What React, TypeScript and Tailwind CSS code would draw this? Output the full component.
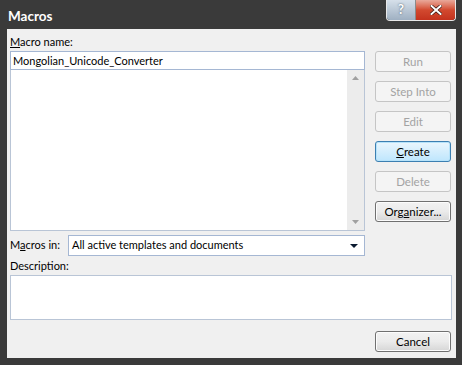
const font = { fontFamily: 'Lato, "Noto Sans", sans-serif' };

function DlgButton({ label, accel, state }: { label: string; accel?: number; state: "disabled" | "normal" | "focused" }) {
  const cls =
    state === "disabled"
      ? "border-[#c5c5c5] bg-[#f4f4f4] text-[#a3a3a3]"
      : state === "focused"
      ? "border-[#3c7fb1] bg-gradient-to-b from-[#eaf6fd] to-[#bee6fd] text-black shadow-[inset_0_0_0_1px_#b7e3fa]"
      : "border-[#707070] bg-gradient-to-b from-[#f2f2f2] via-[#ebebeb] to-[#d6d6d6] text-black shadow-[inset_0_0_0_1px_#fcfcfc]";
  return (
    <div className={`flex h-[21px] w-[76px] items-center justify-center rounded-[3px] border text-[11.5px] ${cls}`}>
      {accel === undefined ? (
        label
      ) : (
        <span>
          {label.slice(0, accel)}
          <span className="underline">{label[accel]}</span>
          {label.slice(accel + 1)}
        </span>
      )}
    </div>
  );
}

export default function App() {
  return (
    <div className="flex h-[365px] w-[462px] flex-col bg-[#3a3a3a]" style={font}>
      {/* title bar */}
      <div className="flex h-[29px] items-start justify-between">
        <span className="pl-[8px] pt-[7px] text-[13.5px] font-bold leading-[18px] text-white">Macros</span>
        <div className="mr-[6px] flex h-[21px] overflow-hidden rounded-b-[4px] border border-t-0 border-[#e8e8e8]">
          <div className="flex w-[29px] items-center justify-center border-r border-[#8a8a8a] bg-gradient-to-b from-[#d6e0ea] to-[#9fb0c2] text-[13px] font-bold text-white [text-shadow:0_0_2px_#3a4a5a]">
            ?
          </div>
          <div className="flex w-[39px] items-center justify-center bg-gradient-to-b from-[#e8a89a] via-[#d2492f] to-[#c4321d]">
            <svg width="12" height="10" viewBox="0 0 12 10">
              <path d="M1.5 1 L10.5 9 M10.5 1 L1.5 9" stroke="#3b1a14" strokeWidth="3.4" strokeLinecap="square" />
              <path d="M1.5 1 L10.5 9 M10.5 1 L1.5 9" stroke="#fff" strokeWidth="2" strokeLinecap="square" />
            </svg>
          </div>
        </div>
      </div>

      {/* client area */}
      <div className="mb-[7px] ml-[7px] mr-[6px] flex flex-1 flex-col bg-[#f0f0f0] pl-[3px] pr-[4px] pt-[6px] text-[11px] text-black">
        <div className="flex gap-[10px]">
          <div className="flex w-[355px] flex-col">
            <div className="h-[16px] leading-[14px]">
              <span className="underline">M</span>acro name:
            </div>
            <div className="flex h-[19px] items-center border border-[#a5b7d3] bg-white pl-[2px] leading-none">
              Mongolian_Unicode_Converter
            </div>
            <div className="flex h-[161px] border border-t-0 border-[#b9c5d6] bg-white">
              <div className="flex-1" />
              <div className="flex w-[17px] flex-col items-center justify-between bg-[#ececec] py-[6px]">
                <svg width="7" height="4" viewBox="0 0 7 4">
                  <path d="M0 4 L3.5 0 L7 4 Z" fill="#a0a0a0" />
                </svg>
                <svg width="7" height="4" viewBox="0 0 7 4">
                  <path d="M0 0 L7 0 L3.5 4 Z" fill="#a0a0a0" />
                </svg>
              </div>
            </div>
          </div>
          <div className="mt-[16px] flex flex-col gap-[9px]">
            <DlgButton label="Run" state="disabled" />
            <DlgButton label="Step Into" state="disabled" />
            <DlgButton label="Edit" state="disabled" />
            <DlgButton label="Create" accel={0} state="focused" />
            <DlgButton label="Delete" state="disabled" />
            <DlgButton label="Organizer..." accel={3} state="normal" />
          </div>
        </div>

        <div className="mt-[4px] flex h-[21px] w-[355px] items-center">
          <div className="w-[58px]">
            M<span className="underline">a</span>cros in:
          </div>
          <div className="flex h-full flex-1 items-center justify-between border border-[#a5b7d3] bg-white pl-[3px] pr-[6px]">
            <span>All active templates and documents</span>
            <svg width="8" height="4" viewBox="0 0 8 4">
              <path d="M0 0 L8 0 L4 4 Z" fill="#0a1a30" />
            </svg>
          </div>
        </div>

        <div className="mt-[3px] h-[16px] leading-[14px]">Description:</div>
        <div className="h-[45px] border border-[#b9c5d6] bg-white" />

        <div className="mt-[11px] flex justify-end pr-[1px]">
          <DlgButton label="Cancel" state="normal" />
        </div>
      </div>
    </div>
  );
}
